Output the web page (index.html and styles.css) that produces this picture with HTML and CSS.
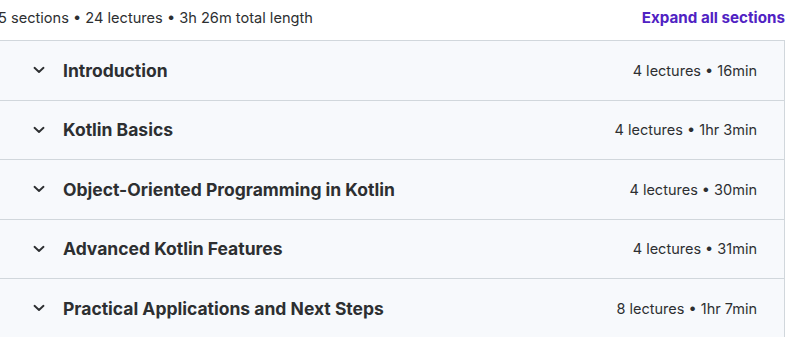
FILE: index.html
```html
<!DOCTYPE html>
<html lang="en">
  <head>
      <meta charset="UTF-8">
      <meta name="viewport" content="width=device-width, initial-scale=1.0">
      <title>Course content</title>
      <link rel="stylesheet" href="styles.css">
  </head>
  <body>
    <div class="curriculum">
        <div class="curriculum-head">
            <span class="summary">5 sections • 24 lectures • 3h 26m total length</span>
            <a class="expand-btn" href="#">Expand all sections</a>
        </div>

        <div class="sections">
            <div class="section">
                <svg class="chevron" viewBox="0 0 12 8"><path d="M1.5 1.8 L6 6 L10.5 1.8"/></svg>
                <span class="section-title">Introduction</span>
                <span class="section-meta">4 lectures • 16min</span>
            </div>
            <div class="section">
                <svg class="chevron" viewBox="0 0 12 8"><path d="M1.5 1.8 L6 6 L10.5 1.8"/></svg>
                <span class="section-title">Kotlin Basics</span>
                <span class="section-meta">4 lectures • 1hr 3min</span>
            </div>
            <div class="section">
                <svg class="chevron" viewBox="0 0 12 8"><path d="M1.5 1.8 L6 6 L10.5 1.8"/></svg>
                <span class="section-title">Object-Oriented Programming in Kotlin</span>
                <span class="section-meta">4 lectures • 30min</span>
            </div>
            <div class="section">
                <svg class="chevron" viewBox="0 0 12 8"><path d="M1.5 1.8 L6 6 L10.5 1.8"/></svg>
                <span class="section-title">Advanced Kotlin Features</span>
                <span class="section-meta">4 lectures • 31min</span>
            </div>
            <div class="section">
                <svg class="chevron" viewBox="0 0 12 8"><path d="M1.5 1.8 L6 6 L10.5 1.8"/></svg>
                <span class="section-title">Practical Applications and Next Steps</span>
                <span class="section-meta">8 lectures • 1hr 7min</span>
            </div>
        </div>
    </div>
  </body>
</html>
```

FILE: styles.css
```css
body {
    font-family: Inter, "Noto Sans", Arial, sans-serif;
    background-color: #ffffff;
    color: #2d2f31;
    margin: 0;
    padding: 0;
    overflow: hidden;
}

.curriculum {
    width: 790px;
    margin-left: -5px;
}

.curriculum-head {
    display: flex;
    justify-content: space-between;
    align-items: center;
    height: 40px;
}

.summary {
    font-size: 14.6px;
    padding-left: 3px;
    padding-bottom: 4px;
}

.expand-btn {
    font-size: 15.2px;
    font-weight: 700;
    color: #5022c3;
    text-decoration: none;
    padding-bottom: 6px;
}

.sections {
    border: 1px solid #d1d7dc;
    border-bottom: none;
}

.section {
    display: flex;
    align-items: center;
    height: 58.5px;
    padding: 0 27px 0 37px;
    background-color: #f7f9fc;
    border-bottom: 1px solid #d1d7dc;
}

.chevron {
    width: 12px;
    height: 8px;
    fill: none;
    stroke: #2d2f31;
    stroke-width: 1.9;
    stroke-linecap: round;
    stroke-linejoin: round;
    margin-right: 18px;
}

.section-title {
    flex: 1;
    font-size: 17.5px;
    font-weight: 700;
}

.section-meta {
    font-size: 14.5px;
}
```
